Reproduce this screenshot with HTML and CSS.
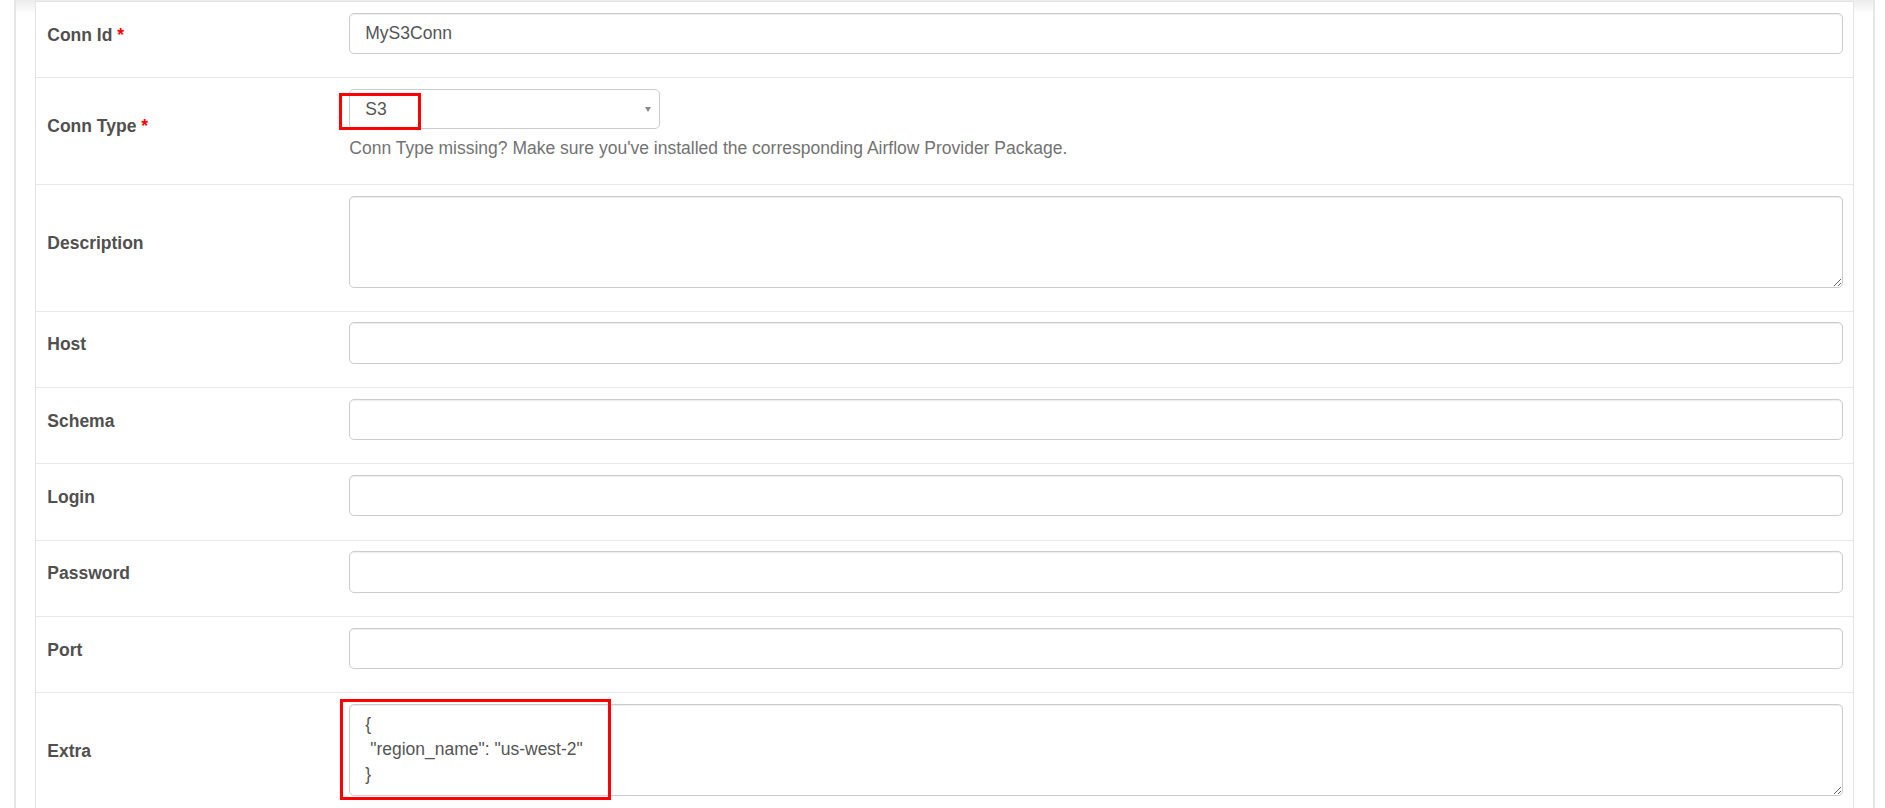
FILE: index.html
```html
<!DOCTYPE html>
<html lang="en">
<head>
<meta charset="utf-8">
<title>Edit Connection</title>
<link rel="stylesheet" href="styles.css">
</head>
<body>
<div class="page">
  <div class="panel">
    <div class="row">
      <div class="label-cell"><label>Conn Id <span class="req">*</span></label></div>
      <div class="field-cell"><input class="form-control" type="text" value="MyS3Conn"></div>
    </div>
    <div class="row">
      <div class="label-cell"><label>Conn Type <span class="req">*</span></label></div>
      <div class="field-cell">
        <div class="select-wrap">
          <div class="select2">
            <span class="select-text">S3</span>
            <span class="select-arrow"></span>
          </div>
          <div class="annot annot-type"></div>
        </div>
        <p class="help-block">Conn Type missing? Make sure you've installed the corresponding Airflow Provider Package.</p>
      </div>
    </div>
    <div class="row">
      <div class="label-cell"><label>Description</label></div>
      <div class="field-cell"><textarea class="form-control area"></textarea></div>
    </div>
    <div class="row">
      <div class="label-cell"><label>Host</label></div>
      <div class="field-cell"><input class="form-control" type="text"></div>
    </div>
    <div class="row">
      <div class="label-cell"><label>Schema</label></div>
      <div class="field-cell"><input class="form-control" type="text"></div>
    </div>
    <div class="row">
      <div class="label-cell"><label>Login</label></div>
      <div class="field-cell"><input class="form-control" type="text"></div>
    </div>
    <div class="row">
      <div class="label-cell"><label>Password</label></div>
      <div class="field-cell"><input class="form-control" type="password"></div>
    </div>
    <div class="row">
      <div class="label-cell"><label>Port</label></div>
      <div class="field-cell"><input class="form-control" type="text"></div>
    </div>
    <div class="row">
      <div class="label-cell"><label>Extra</label></div>
      <div class="field-cell">
        <div class="extra-wrap">
          <textarea class="form-control area">{
 "region_name": "us-west-2"
}</textarea>
          <div class="annot annot-extra"></div>
        </div>
      </div>
    </div>
  </div>
</div>
</body>
</html>
```

FILE: styles.css
```css
html, body {
  margin: 0;
  padding: 0;
  height: 100%;
  overflow: hidden;
  background: #fff;
}

body {
  font-family: "Liberation Sans", Arial, Helvetica, sans-serif;
  font-size: 17.5px;
  line-height: 25px;
  color: #51504f;
}

.page {
  margin-left: 14px;
  width: 1861px;
  height: 808px;
  box-sizing: border-box;
  border-left: 2px solid #e6e6e6;
  border-right: 2px solid #e6e6e6;
  padding: 1px 19px 0;
  background: linear-gradient(#ececec, #ffffff 14px) no-repeat;
}

.panel {
  border: 1px solid #e3e3e3;
  background: #fff;
}

.row {
  display: flex;
  border-top: 1px solid #e8e8e8;
}

.row:first-child {
  border-top: 0;
}

.label-cell {
  flex: none;
  width: 303px;
  box-sizing: border-box;
  padding: 10.5px 11px 10.8px 11.3px;
  display: flex;
  align-items: center;
}

.label-cell label {
  font-weight: bold;
  margin-bottom: 9px;
}

.req {
  color: #ff0000;
}

.field-cell {
  flex: 1;
  min-width: 0;
  padding: 10.5px 10.3px 10.8px 10.3px;
}

.form-control {
  display: block;
  width: 100%;
  box-sizing: border-box;
  height: 41.5px;
  margin: 0 0 12.5px;
  padding: 7.5px 15px;
  border: 1px solid #cccccc;
  border-radius: 5px;
  box-shadow: inset 0 1px 1px rgba(0, 0, 0, 0.075);
  background: #fff;
  font-family: "Liberation Sans", Arial, Helvetica, sans-serif;
  font-size: 17.5px;
  line-height: 25px;
  color: #555555;
  outline: none;
}

.area {
  height: 92px;
  resize: vertical;
}

.select-wrap {
  position: relative;
}

.select2 {
  width: 311px;
  height: 40.7px;
  box-sizing: border-box;
  border: 1px solid #cccccc;
  border-radius: 5px;
  background: #fff;
  padding: 0 15px;
  display: flex;
  align-items: center;
  justify-content: space-between;
  color: #555555;
}

.select-arrow {
  width: 0;
  height: 0;
  margin-right: -7px;
  border-left: 3.5px solid transparent;
  border-right: 3.5px solid transparent;
  border-top: 5px solid #888888;
}

.help-block {
  margin: 6.25px 0 12.5px;
  color: #737373;
}

.extra-wrap {
  position: relative;
}

.annot {
  position: absolute;
  box-sizing: border-box;
  border: 3px solid #ff0000;
  pointer-events: none;
}

.annot-type {
  left: -10px;
  top: 4px;
  width: 81.4px;
  height: 37.4px;
}

.annot-extra {
  left: -9.3px;
  top: -5px;
  width: 270.7px;
  height: 101.4px;
}
```
